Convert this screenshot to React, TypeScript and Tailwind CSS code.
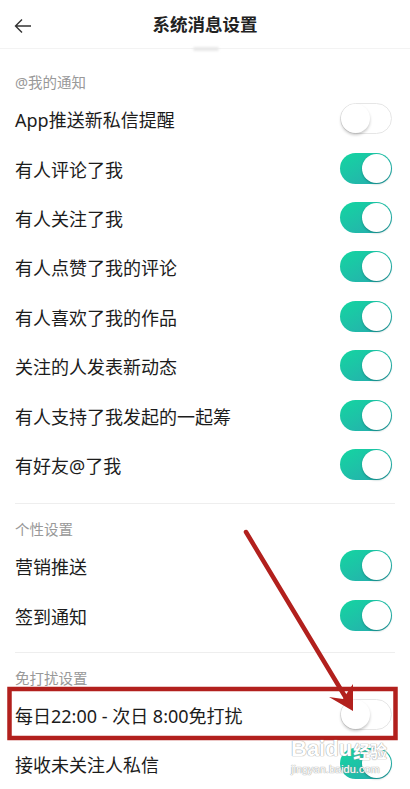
import React from "react";

type Row = { label: string; on: boolean };

const mine: Row[] = [
  { label: "App推送新私信提醒", on: false },
  { label: "有人评论了我", on: true },
  { label: "有人关注了我", on: true },
  { label: "有人点赞了我的评论", on: true },
  { label: "有人喜欢了我的作品", on: true },
  { label: "关注的人发表新动态", on: true },
  { label: "有人支持了我发起的一起筹", on: true },
  { label: "有好友@了我", on: true },
];

const personal: Row[] = [
  { label: "营销推送", on: true },
  { label: "签到通知", on: true },
];

const quiet: Row[] = [
  { label: "每日22:00 - 次日 8:00免打扰", on: false },
  { label: "接收未关注人私信", on: true },
];

function Toggle({ on }: { on: boolean }) {
  if (on) {
    return (
      <div className="flex h-[31px] w-[52px] items-center justify-end rounded-full bg-linear-to-br from-[#12d6a0] to-[#27a9ae] pr-[1px]">
        <div className="h-[29px] w-[29px] rounded-full bg-white shadow-[0_1px_2px_rgba(0,80,80,0.45)]" />
      </div>
    );
  }
  return (
    <div className="flex h-[31px] w-[52px] items-center rounded-full border border-[#e6e6e6] bg-white">
      <div className="h-[29px] w-[29px] rounded-full bg-white shadow-[0_2px_3px_rgba(0,0,0,0.22)]" />
    </div>
  );
}

function SettingRow({ row }: { row: Row }) {
  return (
    <div className="flex h-[49.4px] items-center justify-between pl-[15px] pr-[18px]">
      <span className="mt-[3px] text-[18px] leading-none text-[#1c1c1c]">{row.label}</span>
      <Toggle on={row.on} />
    </div>
  );
}

function Label({ text, top }: { text: string; top: string }) {
  return (
    <div className={`${top} pb-[3px] pl-[15px] text-[14.5px] leading-[18px] text-[#999]`}>
      {text}
    </div>
  );
}

export default function App() {
  return (
    <div
      className="relative h-[789px] w-[410px] overflow-hidden bg-white"
      style={{ fontFamily: '"Noto Sans", "Noto Sans CJK SC", sans-serif' }}
    >
      {/* Header */}
      <div className="relative flex h-[49px] items-center justify-center border-b border-[#f3f3f3]">
        <svg className="absolute left-[13px] top-[16px]" width="20" height="20" viewBox="0 0 20 20">
          <path d="M18 10H2.5M9 3.5L2.5 10L9 16.5" fill="none" stroke="#333" strokeWidth="1.4" />
        </svg>
        <span className="text-[17.5px] font-bold text-[#222]">系统消息设置</span>
        <div className="absolute bottom-[-3px] left-[193px] h-[4px] w-[26px] rounded-full bg-[#e8e8e8] blur-[1px]" />
      </div>

      <Label text="@我的通知" top="pt-[24px]" />
      {mine.map((r) => (
        <SettingRow key={r.label} row={r} />
      ))}

      <div className="mx-[15px] mt-[14px] h-px bg-[#eeeeee]" />
      <Label text="个性设置" top="pt-[16px]" />
      {personal.map((r) => (
        <SettingRow key={r.label} row={r} />
      ))}

      <div className="mx-[15px] mt-[12px] h-px bg-[#eeeeee]" />
      <Label text="免打扰设置" top="pt-[16px]" />
      {quiet.map((r) => (
        <SettingRow key={r.label} row={r} />
      ))}

      {/* annotation: box and arrow */}
      <svg className="pointer-events-none absolute left-0 top-0" width="410" height="789" viewBox="0 0 410 789">
        <rect x="9.5" y="689" width="386" height="49" fill="none" stroke="#b2201d" strokeWidth="4.5" />
        <path d="M246 532L349 703" stroke="#b2201d" strokeWidth="4.5" strokeLinecap="round" />
        <path d="M353 711L329 697L343 699L353 684Z" fill="#b2201d" />
      </svg>

      {/* watermark */}
      <div className="pointer-events-none absolute left-[291px] top-[738px] flex flex-col">
        <div className="flex items-end text-white [text-shadow:0_0_1px_#999,0_0_1px_#999]">
          <span className="text-[22px] font-bold leading-none" style={{ fontFamily: '"Liberation Sans", sans-serif' }}>
            Baidu
          </span>
          <span className="ml-[1px] text-[17px] font-bold leading-none">经验</span>
        </div>
        <span
          className="mt-[4px] text-[11px] leading-none text-white [text-shadow:0_0_1px_#999,0_0_1px_#999]"
          style={{ fontFamily: '"Liberation Sans", sans-serif' }}
        >
          jingyan.baidu.com
        </span>
      </div>
    </div>
  );
}
